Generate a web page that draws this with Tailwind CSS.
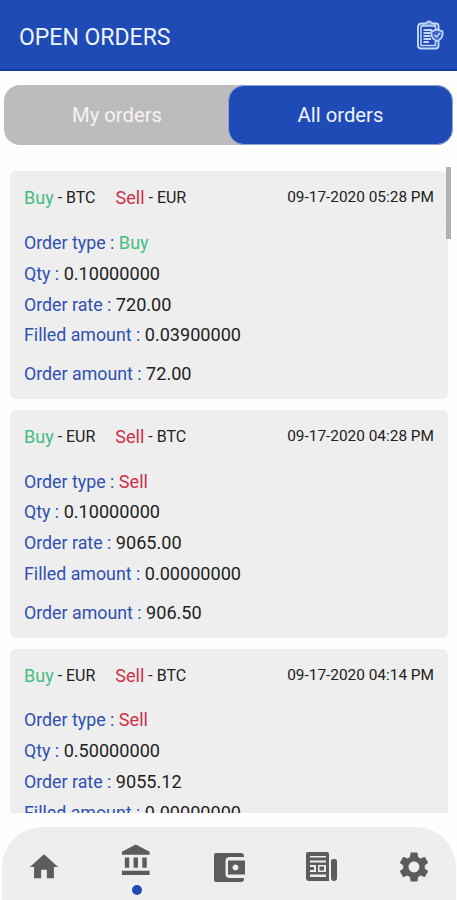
<!DOCTYPE html>
<html lang="en">
<head>
<meta charset="utf-8">
<meta name="viewport" content="width=device-width, initial-scale=1">
<title>Open orders</title>
<script src="https://cdn.jsdelivr.net/npm/@tailwindcss/browser@4"></script>
</head>
<body class="bg-[#fefefe] font-['Roboto',sans-serif] overflow-hidden">
<div class="flex flex-col w-[457px] h-[900px]">
  <header class="flex items-center justify-between h-[71px] shrink-0 bg-[#1f4bb7] border-b-2 border-[#0f3a9c] pl-[19px] pr-[13px]">
    <h1 class="text-[23px] leading-none text-[#eef4fd] pt-[6px]">OPEN ORDERS</h1>
    <svg class="w-7 h-[30px] mt-[1px]" viewBox="0 0 28 30" fill="none" stroke="#c3d8fa" stroke-width="1.5">
      <path d="M9 3.500H5.500Q2 3.500 2 7V25.500Q2 28.500 5 28.500H19.500Q22.500 28.500 22.500 25.500V21M17 3.500H20Q22.500 3.500 22.500 6V10" stroke-width="1.900"/>
      <path d="M7 6H5V25.500H19.500V21M18 6H19.500V10" stroke-width="1.500"/>
      <path d="M7.500 6V4L10 3Q13 -.5 16 3L18.500 4V6Z" fill="#7f9fe0"/>
      <path d="M7.500 10H16M7.500 13H14.500M7.500 16H14.500M7.500 19H15M7.500 22H13" stroke-width="2"/>
      <path d="M21 9.500L26.500 11.500V15Q26 19 21 21Q16 19 15.500 15V11.500Z" fill="#3c66c6" stroke-width="1.800"/>
      <path d="M18.500 15L20.500 17L24 13"/>
    </svg>
  </header>

  <div class="flex h-[60px] shrink-0 mt-[14px] ml-[4px] mr-[4px] rounded-[16px] bg-[#bdbbbb] text-[20.3px]">
    <div class="flex items-center justify-center w-[224px] text-[#f4f4f4] pl-[2px] pt-[1px]">My orders</div>
    <div class="flex items-center justify-center w-[225px] rounded-[16px] bg-[#1f4bb7] border border-[#8fa3d4] text-[#eef4fd] pt-[1px]">All orders</div>
  </div>

  <main class="relative h-[646px] mt-[22px] shrink-0 overflow-hidden pl-[10px] pr-[9px] pt-[4px] text-[18px] text-[#222]">
    <article class="h-[228px] mb-[11px] rounded-[6px] bg-[#eeeeee] px-[14px]">
      <div class="flex items-center h-[51px] -mx-[8px] px-[8px] border-b border-[#f1f1f1] whitespace-pre pt-[3px]"><span class="text-[#45bd82]">Buy</span><span class="text-[16px]"> - BTC</span><span class="ml-[20px] text-[#cc3048]">Sell</span><span class="text-[16px]"> - EUR</span><time class="ml-auto text-[15.4px]">09-17-2020 05:28 PM</time></div>
      <div class="h-[130px] pt-[6px] leading-[30.8px] text-[18.1px] border-b border-[#f2f2f2]">
        <p><span class="text-[17.8px] text-[#2e51b2]">Order type :</span> <span class="text-[#45bd82]">Buy</span></p>
        <p><span class="text-[17.8px] text-[#2e51b2]">Qty :</span> 0.10000000</p>
        <p><span class="text-[17.8px] text-[#2e51b2]">Order rate :</span> 720.00</p>
        <p><span class="text-[17.8px] text-[#2e51b2]">Filled amount :</span> 0.03900000</p>
      </div>
      <p class="leading-[43px] text-[18.1px]"><span class="text-[17.8px] text-[#2e51b2]">Order amount :</span> 72.00</p>
    </article>
    <article class="h-[228px] mb-[11px] rounded-[6px] bg-[#eeeeee] px-[14px]">
      <div class="flex items-center h-[51px] -mx-[8px] px-[8px] border-b border-[#f1f1f1] whitespace-pre pt-[3px]"><span class="text-[#45bd82]">Buy</span><span class="text-[16px]"> - EUR</span><span class="ml-[20px] text-[#cc3048]">Sell</span><span class="text-[16px]"> - BTC</span><time class="ml-auto text-[15.4px]">09-17-2020 04:28 PM</time></div>
      <div class="h-[130px] pt-[5.5px] leading-[30.8px] text-[18.1px] border-b border-[#f0f0f0]">
        <p><span class="text-[17.8px] text-[#2e51b2]">Order type :</span> <span class="text-[#cc3048]">Sell</span></p>
        <p><span class="text-[17.8px] text-[#2e51b2]">Qty :</span> 0.10000000</p>
        <p><span class="text-[17.8px] text-[#2e51b2]">Order rate :</span> 9065.00</p>
        <p><span class="text-[17.8px] text-[#2e51b2]">Filled amount :</span> 0.00000000</p>
      </div>
      <p class="leading-[43px] text-[18.1px]"><span class="text-[17.8px] text-[#2e51b2]">Order amount :</span> 906.50</p>
    </article>
    <article class="h-[228px] rounded-[6px] bg-[#eeeeee] px-[14px]">
      <div class="flex items-center h-[51px] -mx-[8px] px-[8px] border-b border-[#f1f1f1] whitespace-pre pt-[3px]"><span class="text-[#45bd82]">Buy</span><span class="text-[16px]"> - EUR</span><span class="ml-[20px] text-[#cc3048]">Sell</span><span class="text-[16px]"> - BTC</span><time class="ml-auto text-[15.4px]">09-17-2020 04:14 PM</time></div>
      <div class="h-[130px] pt-[5.3px] leading-[30.8px] text-[18.1px]">
        <p><span class="text-[17.8px] text-[#2e51b2]">Order type :</span> <span class="text-[#cc3048]">Sell</span></p>
        <p><span class="text-[17.8px] text-[#2e51b2]">Qty :</span> 0.50000000</p>
        <p><span class="text-[17.8px] text-[#2e51b2]">Order rate :</span> 9055.12</p>
        <p><span class="text-[17.8px] text-[#2e51b2]">Filled amount :</span> 0.00000000</p>
      </div>
    </article>
    <div class="absolute top-0 right-[6px] w-[5px] h-[72px] bg-[#b1b1b1]"></div>
  </main>

  <nav class="grid grid-cols-5 h-[73px] mt-[14px] ml-[2px] mr-[1px] rounded-t-[40px] bg-[#eeeeee] text-[#5b5c5e]">
    <a class="flex justify-center pt-[23px] pr-[6px]"><svg class="w-[34px] h-[34px]" viewBox="0 0 24 24" fill="currentColor"><path d="M10 20v-6h4v6h5v-8h3L12 3 2 12h3v8z"/></svg></a>
    <a class="flex flex-col items-center pt-[16px] pr-[3px]"><svg class="w-[35px] h-[35px]" viewBox="0 0 24 24" fill="currentColor"><path d="M4 10v7h3v-7H4zm6 0v7h3v-7h-3zM2 22h19v-3H2v3zm14-12v7h3v-7h-3zm-4.500-9L2 6v2h19V6l-9.500-5z"/></svg><span class="w-[10px] h-[10px] mt-[7px] rounded-full bg-[#1f4bb7]"></span></a>
    <a class="flex justify-center pt-[26px] pl-[2px]"><svg class="w-[32px] h-[29px]" viewBox="0 0 32 29" fill="currentColor"><path fill-rule="evenodd" d="M2 0H27Q30 0 30 3V4H16Q11.500 4 11.500 8V21Q11.500 25 16 25H30V26Q30 29 27 29H2Q0 29 0 27V2Q0 0 2 0ZM14 7.500H31V21.500H14ZM21.500 11.500a3 3 0 1 0 .01 0Z"/></svg></a>
    <a class="flex justify-center pt-[25px] pl-[5px]"><svg class="w-[32px] h-[30px]" viewBox="0 0 32 30" fill="currentColor"><path fill-rule="evenodd" d="M2 0H21Q23 0 23 2V29H3Q0 29 0 26V2Q0 0 2 0ZM4 4V5.500H20V4ZM4 8.500V10.500H20V8.500ZM4 13V15H8V18H4V20H10V13ZM12 13V20H20V13ZM4 22.500V25H20V22.500Z"/><path d="M13.500 14.500H18V18.500H13.500ZM25 9Q25 7 27 7H29Q31 7 31 9V26Q31 29 28 29T25 26Z"/></svg></a>
    <a class="flex justify-center pt-[22px] pl-[6px]"><svg class="w-[36px] h-[36px]" viewBox="0 0 24 24" fill="currentColor"><path d="M19.140 12.940c.04-.3.060-.610.060-.940 0-.320-.020-.640-.070-.940l2.030-1.580c.180-.140.230-.410.120-.610l-1.920-3.320c-.120-.220-.370-.290-.590-.220l-2.390.960c-.5-.380-1.030-.7-1.620-.940L14.400 2.810c-.040-.240-.240-.410-.480-.410h-3.840c-.240 0-.430.170-.470.410l-.360 2.540c-.590.240-1.130.570-1.620.940l-2.390-.960c-.220-.080-.470 0-.590.220L2.740 8.870c-.120.210-.080.470.120.610l2.030 1.580c-.050.300-.090.630-.090.940s.020.640.070.940l-2.030 1.580c-.180.140-.230.410-.120.610l1.920 3.320c.120.220.370.290.590.220l2.390-.960c.500.380 1.030.700 1.620.940l.360 2.540c.050.240.240.410.480.410h3.840c.240 0 .440-.170.470-.410l.360-2.540c.590-.240 1.130-.560 1.620-.940l2.390.960c.220.080.470 0 .590-.220l1.920-3.320c.120-.220.070-.470-.120-.610l-2.010-1.580zM12 15.600c-1.980 0-3.600-1.620-3.600-3.600s1.620-3.600 3.600-3.600 3.600 1.620 3.600 3.600-1.620 3.600-3.600 3.600z"/></svg></a>
  </nav>
</div>
</body>
</html>
